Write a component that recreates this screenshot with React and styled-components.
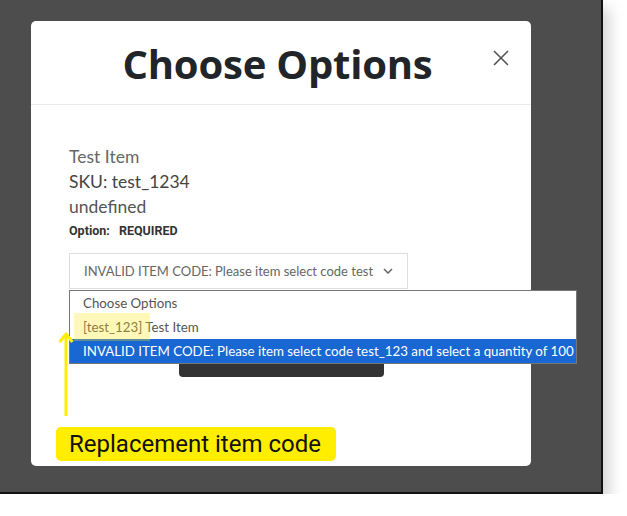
import React from 'react';
import styled, { createGlobalStyle } from 'styled-components';

const GlobalStyle = createGlobalStyle`
  html, body {
    margin: 0;
    padding: 0;
    background: #ffffff;
  }
  body {
    font-family: Lato, "Liberation Sans", sans-serif;
  }
`;

const Frame = styled.div`
  width: 570px;
  height: 471px;
  padding: 21px 0 0 31px;
  box-sizing: content-box;
  background: #4d4d4d;
  border-right: 2px solid #111;
  border-bottom: 2px solid #111;
  box-shadow: 6px 8px 14px rgba(0, 0, 0, 0.18);
`;

const Modal = styled.div`
  position: relative;
  width: 500px;
  height: 445px;
  background: #fff;
  border-radius: 5px;
  display: flex;
  flex-direction: column;
`;

const Header = styled.div`
  height: 83px;
  border-bottom: 1px solid #e9ecef;
  display: flex;
  align-items: center;
  justify-content: center;
  padding-right: 7px;
  position: relative;
`;

const Title = styled.h1`
  margin: 0;
  padding-top: 2px;
  font-family: "Open Sans", sans-serif;
  font-weight: 700;
  font-size: 40px;
  color: #212529;
  letter-spacing: -0.2px;
`;

const CloseButton = styled.button`
  position: absolute;
  right: 18px;
  top: 25px;
  width: 24px;
  height: 24px;
  padding: 0;
  border: none;
  background: none;
  display: flex;
  align-items: center;
  justify-content: center;
`;

const Body = styled.div`
  padding: 39px 38px 0 38px;
  display: flex;
  flex-direction: column;
`;

const ItemLine = styled.div`
  font-size: 17.5px;
  line-height: 25px;
  color: ${p => p.color || '#666'};
`;

const OptionLabel = styled.div`
  margin-top: 4px;
  font-family: Roboto, sans-serif;
  font-weight: 700;
  font-size: 12.5px;
  line-height: 15px;
  color: #333;
  word-spacing: 6px;
`;

const Select = styled.div`
  margin-top: 15px;
  width: 339px;
  height: 36px;
  box-sizing: border-box;
  border: 1px solid #ddd;
  display: flex;
  align-items: center;
  justify-content: space-between;
  padding: 0 14px 0 14px;
  font-size: 13px;
  white-space: nowrap;
  color: #666;
`;

const SubmitButton = styled.div`
  align-self: center;
  margin-top: 50px;
  width: 205px;
  height: 38px;
  background: #333;
  border-radius: 4px;
`;

const Dropdown = styled.ul`
  position: absolute;
  left: 38px;
  top: 269px;
  width: 508px;
  box-sizing: border-box;
  margin: 0;
  padding: 0;
  list-style: none;
  background: #fff;
  border: 1px solid #767676;
`;

const Option = styled.li`
  height: 24px;
  line-height: 24px;
  padding-left: 13px;
  font-size: 13.3px;
  white-space: nowrap;
  color: ${p => (p.active ? '#fff' : '#555')};
  background: ${p => (p.active ? '#1967d2' : 'transparent')};
`;

const Highlight = styled.div`
  position: absolute;
  left: 4px;
  top: 22px;
  width: 76px;
  height: 28px;
  background: rgba(255, 232, 20, 0.3);
`;

const Arrow = styled.svg`
  position: absolute;
  left: 27px;
  top: 310px;
`;

const Callout = styled.div`
  position: absolute;
  left: 25px;
  top: 406px;
  height: 34px;
  padding: 0 15px 0 13px;
  display: flex;
  align-items: center;
  background: #ffee00;
  border-radius: 5px;
  font-family: Roboto, sans-serif;
  font-size: 24px;
  color: #111;
`;

export default function App() {
  return (
    <>
      <GlobalStyle />
      <Frame>
        <Modal>
          <Header>
            <Title>Choose Options</Title>
            <CloseButton aria-label="close">
              <svg width="18" height="18" viewBox="0 0 18 18">
                <path d="M2 2 L16 16 M16 2 L2 16" stroke="#555" strokeWidth="1.6" fill="none" />
              </svg>
            </CloseButton>
          </Header>
          <Body>
            <ItemLine>Test Item</ItemLine>
            <ItemLine color="#444">SKU: test_1234</ItemLine>
            <ItemLine color="#555">undefined</ItemLine>
            <OptionLabel>Option: REQUIRED</OptionLabel>
            <Select>
              <span>INVALID ITEM CODE: Please item select code test</span>
              <svg width="10" height="6" viewBox="0 0 10 6">
                <path d="M1 1 L5 5 L9 1" stroke="#666" strokeWidth="1.5" fill="none" />
              </svg>
            </Select>
            <SubmitButton />
          </Body>
          <Dropdown>
            <Option>Choose Options</Option>
            <Option>[test_123] Test Item</Option>
            <Option active>INVALID ITEM CODE: Please item select code test_123 and select a quantity of 100</Option>
            <Highlight />
          </Dropdown>
          <Arrow width="16" height="86" viewBox="0 0 16 86">
            <path d="M8 3 L8 85" stroke="#ffee00" strokeWidth="3" fill="none" />
            <path d="M1.5 11 L8 3 L14.5 11" stroke="#ffee00" strokeWidth="3" fill="none" strokeLinejoin="round" />
          </Arrow>
          <Callout>Replacement item code</Callout>
        </Modal>
      </Frame>
    </>
  );
}
